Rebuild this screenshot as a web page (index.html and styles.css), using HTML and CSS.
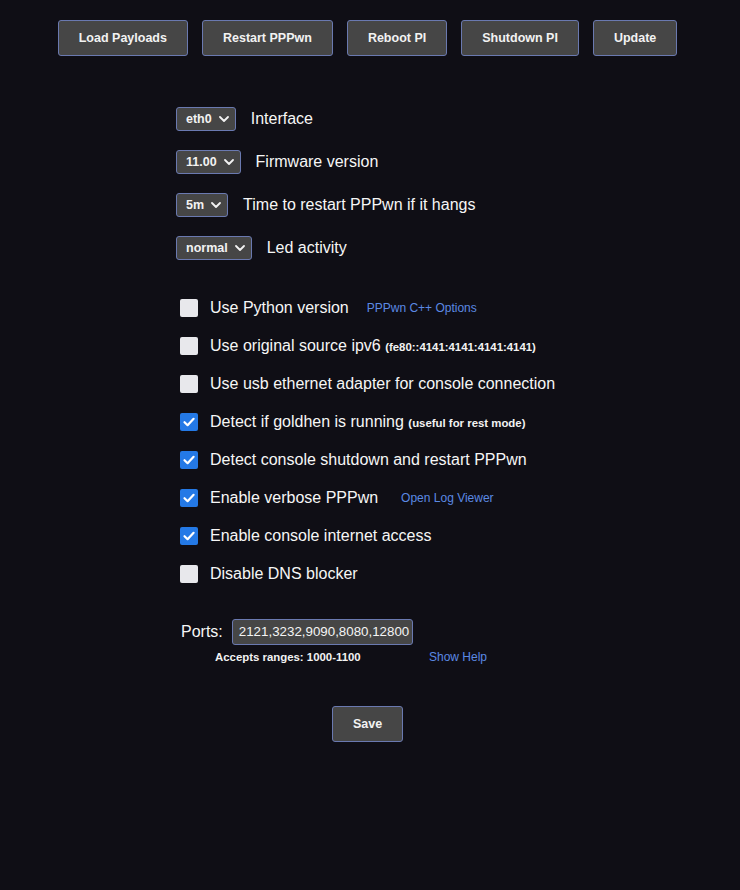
FILE: index.html
```html
<!DOCTYPE html>
<html lang="en">
<head>
<meta charset="utf-8">
<title>PPPwn Settings</title>
<link rel="stylesheet" href="styles.css">
</head>
<body>
<div class="page">
  <nav class="topbar">
    <button class="btn">Load Payloads</button>
    <button class="btn">Restart PPPwn</button>
    <button class="btn">Reboot PI</button>
    <button class="btn">Shutdown PI</button>
    <button class="btn">Update</button>
  </nav>

  <div class="settings">
    <div class="selects">
      <div class="select-row">
        <span class="select">eth0<svg class="chev" viewBox="0 0 10 6" width="10" height="6"><path d="M1 1 L5 5 L9 1" fill="none" stroke="#f2f2f2" stroke-width="1.8" stroke-linecap="round" stroke-linejoin="round"/></svg></span>
        <span class="label">Interface</span>
      </div>
      <div class="select-row">
        <span class="select">11.00<svg class="chev" viewBox="0 0 10 6" width="10" height="6"><path d="M1 1 L5 5 L9 1" fill="none" stroke="#f2f2f2" stroke-width="1.8" stroke-linecap="round" stroke-linejoin="round"/></svg></span>
        <span class="label">Firmware version</span>
      </div>
      <div class="select-row">
        <span class="select">5m<svg class="chev" viewBox="0 0 10 6" width="10" height="6"><path d="M1 1 L5 5 L9 1" fill="none" stroke="#f2f2f2" stroke-width="1.8" stroke-linecap="round" stroke-linejoin="round"/></svg></span>
        <span class="label">Time to restart PPPwn if it hangs</span>
      </div>
      <div class="select-row">
        <span class="select">normal<svg class="chev" viewBox="0 0 10 6" width="10" height="6"><path d="M1 1 L5 5 L9 1" fill="none" stroke="#f2f2f2" stroke-width="1.8" stroke-linecap="round" stroke-linejoin="round"/></svg></span>
        <span class="label">Led activity</span>
      </div>
    </div>

    <div class="checks">
      <div class="check-row">
        <span class="box"></span>
        <span class="label">Use Python version</span><a class="link link-near">PPPwn C++ Options</a>
      </div>
      <div class="check-row">
        <span class="box"></span>
        <span class="label">Use original source ipv6 <small class="note">(fe80::4141:4141:4141:4141)</small></span>
      </div>
      <div class="check-row">
        <span class="box"></span>
        <span class="label">Use usb ethernet adapter for console connection</span>
      </div>
      <div class="check-row">
        <span class="box on"><svg viewBox="0 0 18 18" width="18" height="18"><path d="M4.5 9.2 L7.6 12.2 L13.6 5.8" fill="none" stroke="#fff" stroke-width="2.2" stroke-linecap="round" stroke-linejoin="round"/></svg></span>
        <span class="label">Detect if goldhen is running <small class="note">(useful for rest mode)</small></span>
      </div>
      <div class="check-row">
        <span class="box on"><svg viewBox="0 0 18 18" width="18" height="18"><path d="M4.5 9.2 L7.6 12.2 L13.6 5.8" fill="none" stroke="#fff" stroke-width="2.2" stroke-linecap="round" stroke-linejoin="round"/></svg></span>
        <span class="label">Detect console shutdown and restart PPPwn</span>
      </div>
      <div class="check-row">
        <span class="box on"><svg viewBox="0 0 18 18" width="18" height="18"><path d="M4.5 9.2 L7.6 12.2 L13.6 5.8" fill="none" stroke="#fff" stroke-width="2.2" stroke-linecap="round" stroke-linejoin="round"/></svg></span>
        <span class="label">Enable verbose PPPwn</span><a class="link link-far">Open Log Viewer</a>
      </div>
      <div class="check-row">
        <span class="box on"><svg viewBox="0 0 18 18" width="18" height="18"><path d="M4.5 9.2 L7.6 12.2 L13.6 5.8" fill="none" stroke="#fff" stroke-width="2.2" stroke-linecap="round" stroke-linejoin="round"/></svg></span>
        <span class="label">Enable console internet access</span>
      </div>
      <div class="check-row">
        <span class="box"></span>
        <span class="label">Disable DNS blocker</span>
      </div>
    </div>

    <div class="ports">
      <div class="ports-row">
        <span class="label">Ports:</span>
        <span class="input">2121,3232,9090,8080,12800</span>
      </div>
      <div class="ports-help">
        <span class="note help-note">Accepts ranges: 1000-1100</span>
        <a class="link">Show Help</a>
      </div>
    </div>
  </div>

  <div class="actions">
    <button class="btn">Save</button>
  </div>
</div>
</body>
</html>
```

FILE: styles.css
```css
html, body {
  margin: 0;
  padding: 0;
  background: #0f0e15;
  color: #f4f4f4;
  font-family: "Liberation Sans", Arial, sans-serif;
}

.page {
  width: 735px;
  height: 890px;
}

.topbar {
  display: flex;
  justify-content: center;
  gap: 14px;
  padding-top: 20px;
}

.btn {
  height: 36px;
  padding: 0 20px;
  background: #464646;
  border: 1px solid #6a79b0;
  border-radius: 3px;
  color: #f2f2f2;
  font-family: "Liberation Sans", Arial, sans-serif;
  font-weight: bold;
  font-size: 12.5px;
  white-space: nowrap;
}

.settings {
  width: 383px;
  margin: 51px auto 0;
}

.selects {
  display: flex;
  flex-direction: column;
  gap: 19px;
}

.select-row {
  display: flex;
  align-items: center;
  gap: 15px;
  height: 24px;
}

.select {
  display: flex;
  align-items: center;
  gap: 7px;
  box-sizing: border-box;
  height: 24px;
  padding: 0 6px 0 9px;
  background: #464646;
  border: 1px solid #6a79b0;
  border-radius: 3px;
  font-weight: bold;
  font-size: 12.5px;
  color: #f2f2f2;
}

.chev {
  display: block;
  flex: none;
}

.label {
  font-size: 16px;
  color: #f6f6f6;
  white-space: nowrap;
}

.note {
  font-size: 11.4px;
  font-weight: bold;
  color: #f2f2f2;
}

.checks {
  margin-top: 29px;
  display: flex;
  flex-direction: column;
}

.check-row {
  display: flex;
  align-items: center;
  height: 38px;
}

.box {
  flex: none;
  box-sizing: border-box;
  width: 18px;
  height: 18px;
  margin: 0 12px 0 4px;
  border-radius: 2px;
  background: #e8e8ec;
}

.box svg {
  display: block;
}

.box.on {
  background: #2479e6;
}

.link {
  font-size: 12px;
  color: #5b89e3;
  cursor: pointer;
}

.link-near {
  margin-left: 18px;
}

.link-far {
  margin-left: 23px;
}

.ports {
  margin-top: 26px;
}

.ports-row {
  display: flex;
  align-items: center;
  gap: 9px;
  padding-left: 5px;
  height: 26px;
}

.input {
  box-sizing: border-box;
  width: 181px;
  height: 26px;
  padding: 0 0 0 6px;
  background: #464646;
  border: 1px solid #6a79b0;
  border-radius: 3px;
  font-size: 13.33px;
  line-height: 24px;
  color: #f4f4f4;
  overflow: hidden;
  white-space: nowrap;
}

.ports-help {
  display: flex;
  align-items: center;
  padding-left: 39px;
  margin-top: 5px;
  height: 14px;
}

.help-note {
  width: 214px;
}

.actions {
  display: flex;
  justify-content: center;
  margin-top: 42px;
}
```
